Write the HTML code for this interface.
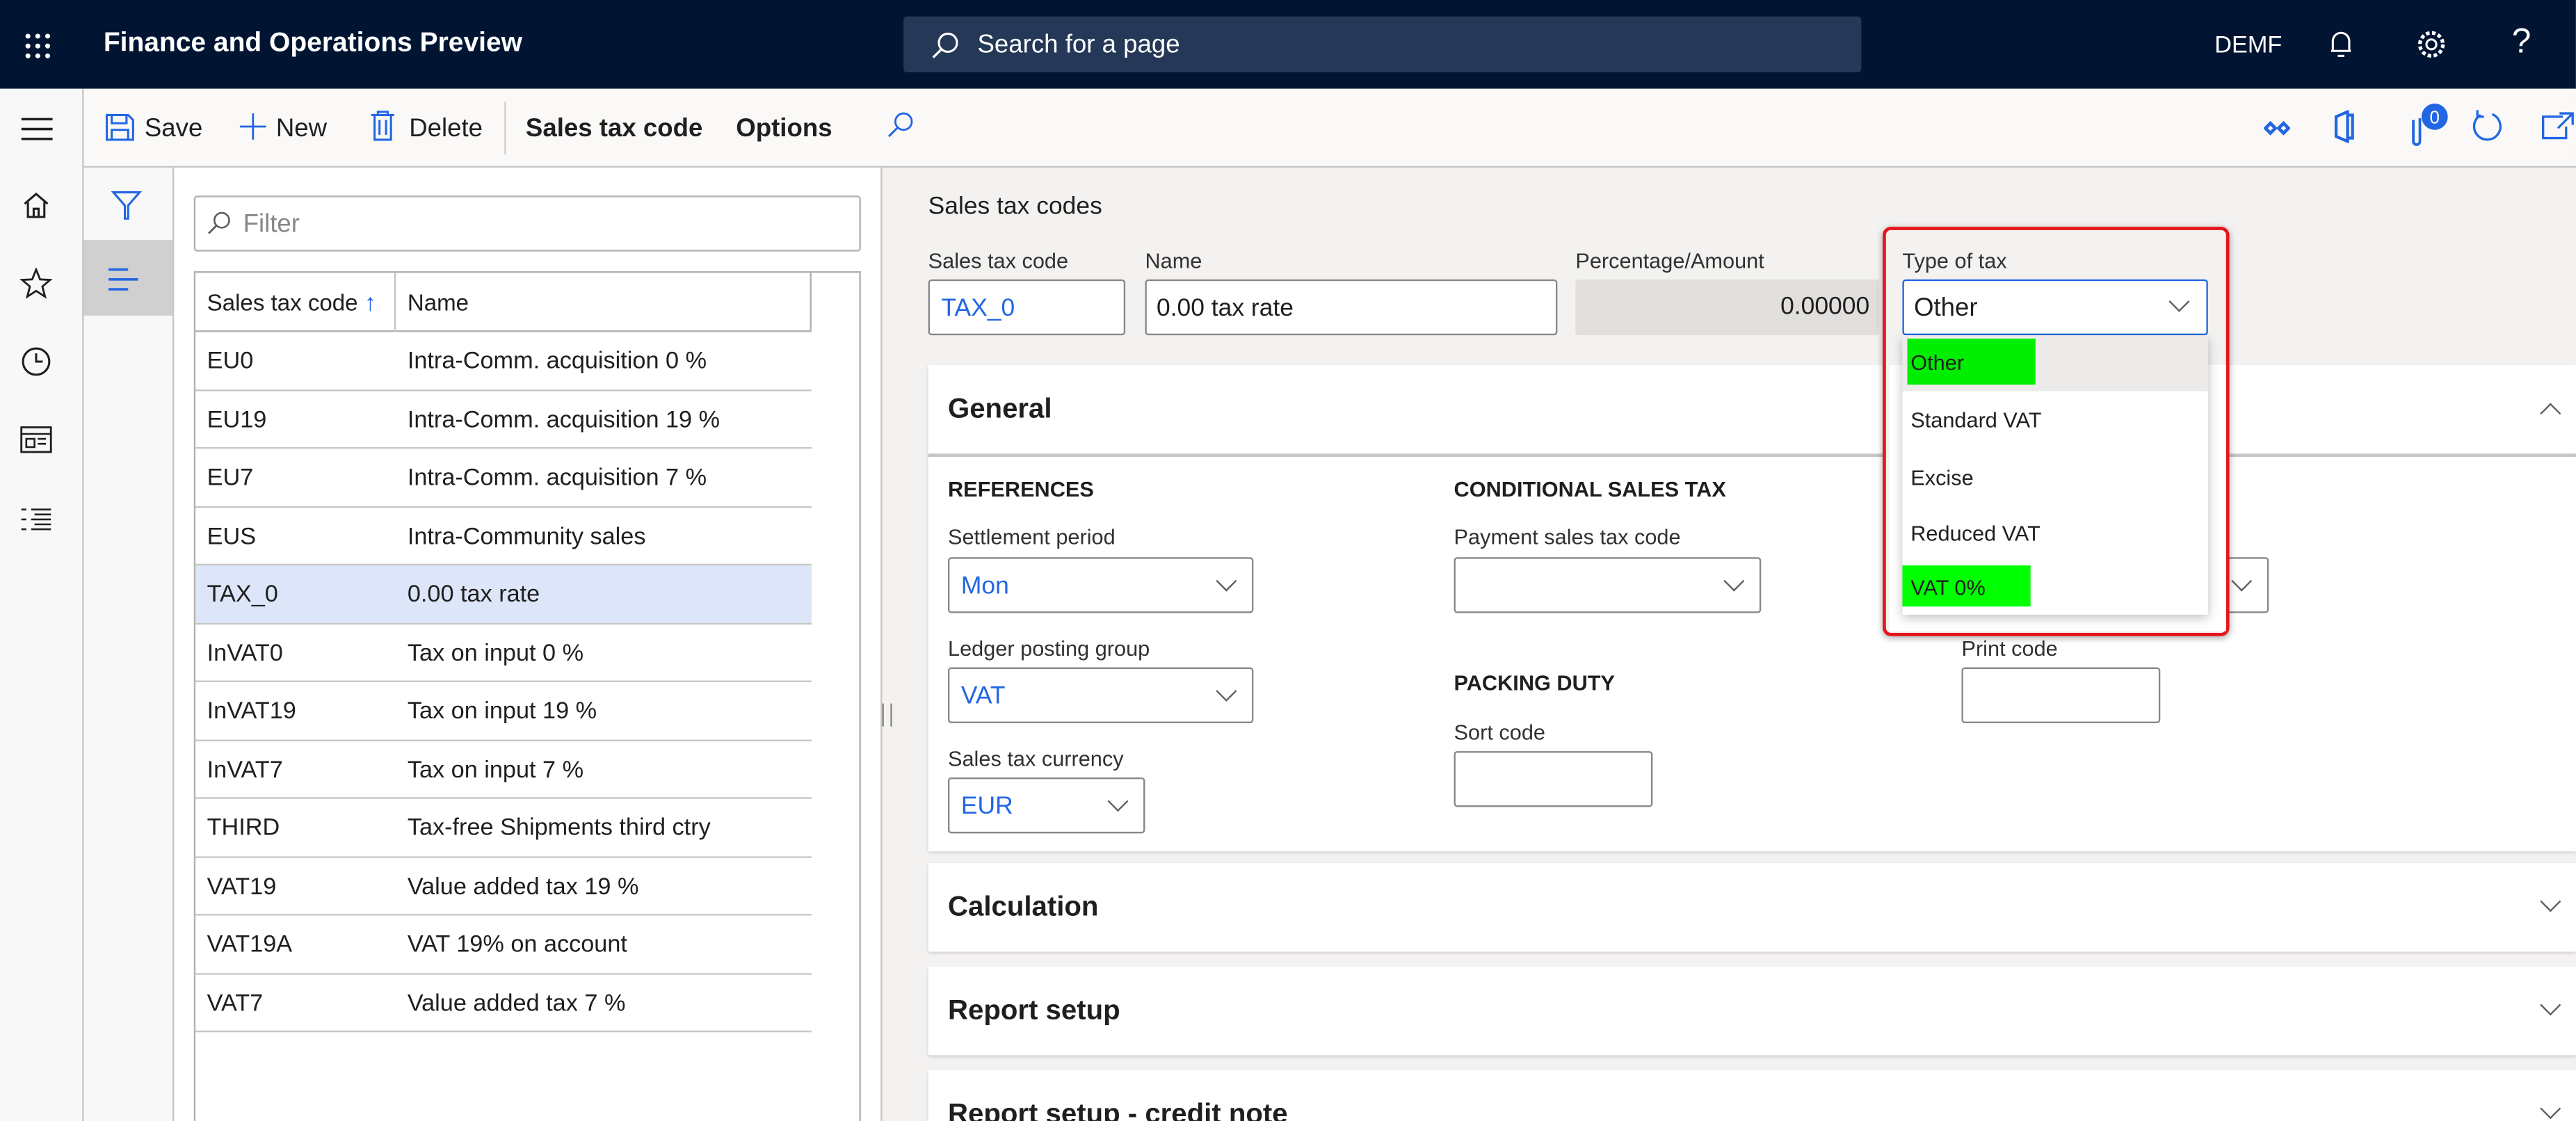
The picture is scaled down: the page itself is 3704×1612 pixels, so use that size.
<!DOCTYPE html>
<html><head><meta charset="utf-8">
<style>
html,body{margin:0;padding:0;width:3704px;height:1612px;overflow:hidden;background:#f3f2f1}
#s{position:absolute;left:0;top:0;width:1568px;height:682px;transform:scale(2.3622,2.3636);transform-origin:0 0;font-family:"Liberation Sans",sans-serif;color:#201f1e;font-size:14px;overflow:hidden;background:#f3f2f1}
.a{position:absolute}
.t{position:absolute;white-space:nowrap}
.in{position:absolute;background:#fff;border:1px solid #8a8886;border-radius:2px;box-sizing:border-box}
.lbl{position:absolute;font-size:13px;color:#323130;white-space:nowrap}
.chev{position:absolute;width:8px;height:8px;border-right:1.3px solid #605e5c;border-bottom:1.3px solid #605e5c;transform:rotate(45deg)}
.row{position:absolute;left:0;width:375px;height:35.5px;border-bottom:1px solid #c8c6c4;box-sizing:border-box}
.row span{position:absolute;top:10px;font-size:14.5px}
.card{position:absolute;left:565px;width:1003px;background:#fff;box-shadow:0 1px 2px rgba(0,0,0,.15)}
.card .h{position:absolute;left:12px;font-size:17px;font-weight:bold;top:17px}
.blue{color:#2266e3}
</style></head><body><div id="s">
<!-- header -->
<div class="a" style="left:0;top:0;width:1568px;height:54px;background:#011532"></div>
<svg class="a" style="left:14px;top:19px" width="18" height="18"><g fill="#fff"><circle cx="3" cy="3" r="1.5"/><circle cx="9" cy="3" r="1.5"/><circle cx="15" cy="3" r="1.5"/><circle cx="3" cy="9" r="1.5"/><circle cx="9" cy="9" r="1.5"/><circle cx="15" cy="9" r="1.5"/><circle cx="3" cy="15" r="1.5"/><circle cx="9" cy="15" r="1.5"/><circle cx="15" cy="15" r="1.5"/></g></svg>
<div class="t" style="left:63px;top:17px;color:#fff;font-weight:bold;font-size:16.5px">Finance and Operations Preview</div>
<div class="a" style="left:550px;top:10px;width:583px;height:34px;background:#253857;border-radius:2px"></div>
<svg class="a" style="left:566px;top:19px" width="18" height="18"><circle cx="11" cy="7" r="5.5" fill="none" stroke="#fff" stroke-width="1.3"/><path d="M7 11 L2 16" stroke="#fff" stroke-width="1.4"/></svg>
<div class="t" style="left:595px;top:19px;color:#fff;font-size:15.5px">Search for a page</div>
<div class="t" style="left:1348px;top:20px;color:#fff;font-size:14.5px">DEMF</div>
<svg class="a" style="left:1416px;top:17px" width="18" height="20"><path d="M4 14 V8 a5 5 0 0 1 10 0 V14 Z M3 14 H15 M7 17 H11" fill="none" stroke="#fff" stroke-width="1.3"/></svg>
<svg class="a" style="left:1470px;top:17px" width="20" height="20"><circle cx="10" cy="10" r="3" fill="none" stroke="#fff" stroke-width="1.3"/><circle cx="10" cy="10" r="7" fill="none" stroke="#fff" stroke-width="2.2" stroke-dasharray="2.2 1.5"/></svg>
<div class="t" style="left:1529px;top:14px;color:#fff;font-size:21px">?</div>
<!-- left nav -->
<div class="a" style="left:0;top:54px;width:50px;height:628px;background:#f8f8f8;border-right:1px solid #c8c6c4"></div>
<svg class="a" style="left:13px;top:71px" width="20" height="15"><path d="M0 1.5H19M0 7.5H19M0 13.5H19" stroke="#201f1e" stroke-width="1.5"/></svg>
<svg class="a" style="left:13px;top:116px" width="18" height="18"><path d="M2 8 L9 2 L16 8 M4 7 V16 H14 V7 M7.5 16 V11 H10.5 V16" fill="none" stroke="#201f1e" stroke-width="1.3"/></svg>
<svg class="a" style="left:12px;top:163px" width="20" height="19"><path d="M10 1 L12.4 7 L18.5 7.3 L13.8 11.3 L15.4 17.5 L10 14 L4.6 17.5 L6.2 11.3 L1.5 7.3 L7.6 7 Z" fill="none" stroke="#201f1e" stroke-width="1.2"/></svg>
<svg class="a" style="left:12px;top:210px" width="20" height="20"><circle cx="10" cy="10" r="8" fill="none" stroke="#201f1e" stroke-width="1.3"/><path d="M10 5V10H14" fill="none" stroke="#201f1e" stroke-width="1.3"/></svg>
<svg class="a" style="left:12px;top:259px" width="20" height="17"><rect x="1" y="1" width="18" height="15" fill="none" stroke="#201f1e" stroke-width="1.2"/><path d="M1 5H19M4 8H9V13H4ZM11 8H16M11 11H16" fill="none" stroke="#201f1e" stroke-width="1.1"/></svg>
<svg class="a" style="left:12px;top:308px" width="20" height="17"><path d="M1 2H4M1 8H4M1 14H4M7 2H19M7 8H19M7 14H19M9 5H19M9 11H19" stroke="#201f1e" stroke-width="1.1"/></svg>
<!-- action pane -->
<div class="a" style="left:51px;top:54px;width:1517px;height:47px;background:#faf9f8;border-bottom:1.5px solid #c8c6c4"></div>
<svg class="a" style="left:64px;top:69px" width="18" height="17"><path d="M1 1H14L17 4V16H1Z M4 1V6H13V1 M4 16V10H14V16" fill="none" stroke="#2266e3" stroke-width="1.3"/></svg>
<div class="t" style="left:88px;top:70px;font-size:15.5px">Save</div>
<svg class="a" style="left:145px;top:68px" width="18" height="18"><path d="M9 1V17M1 9H17" stroke="#2266e3" stroke-width="1.2"/></svg>
<div class="t" style="left:168px;top:70px;font-size:15.5px">New</div>
<svg class="a" style="left:225px;top:67px" width="16" height="19"><path d="M1 3H15M5 3V1H11V3M3 3V18H13V3M6 6V15M10 6V15" fill="none" stroke="#2266e3" stroke-width="1.3"/></svg>
<div class="t" style="left:249px;top:70px;font-size:15.5px">Delete</div>
<div class="a" style="left:307px;top:62px;width:1px;height:32px;background:#d2d0ce"></div>
<div class="t" style="left:320px;top:70px;font-size:15.5px;font-weight:bold;font-weight:600">Sales tax code</div>
<div class="t" style="left:448px;top:70px;font-size:15.5px;font-weight:600">Options</div>
<svg class="a" style="left:539px;top:67px" width="18" height="18"><circle cx="11" cy="7" r="5" fill="none" stroke="#2266e3" stroke-width="1.2"/><path d="M7.5 10.5 L2 16" stroke="#2266e3" stroke-width="1.3"/></svg>
<svg class="a" style="left:1378px;top:72px" width="16" height="12"><g fill="none" stroke="#2266e3" stroke-width="2"><path d="M1 6L4 3L7 6L4 9Z M9 6L12 3L15 6L12 9Z"/></g></svg>
<svg class="a" style="left:1420px;top:67px" width="14" height="20"><path d="M2 4L9 1V19L2 16Z M9 3H12V17H9" fill="none" stroke="#2266e3" stroke-width="1.8"/></svg>
<svg class="a" style="left:1465px;top:62px" width="26" height="28"><path d="M4 11V24a2 2 0 0 0 4 0V10" fill="none" stroke="#2266e3" stroke-width="1.6"/><circle cx="17" cy="9" r="8" fill="#2266e3"/><text x="17" y="13" font-size="11" fill="#fff" text-anchor="middle" font-family="Liberation Sans">0</text></svg>
<svg class="a" style="left:1503px;top:66px" width="21" height="22"><path d="M7 4A8 8 0 1 0 14 3.5" fill="none" stroke="#2266e3" stroke-width="1.4"/><path d="M5 1V5H9" fill="none" stroke="#2266e3" stroke-width="1.4"/></svg>
<svg class="a" style="left:1546px;top:68px" width="22" height="18"><path d="M14 3H2V16H16V9 M12 1H20V8 M20 1L11 10" fill="none" stroke="#2266e3" stroke-width="1.4"/></svg>
<!-- filter pane -->
<div class="a" style="left:51px;top:102px;width:54px;height:580px;background:#f8f8f8;border-right:1px solid #c8c6c4"></div>
<svg class="a" style="left:67px;top:115px" width="20" height="20"><path d="M2 2H18L11 10V18H9V10Z" fill="none" stroke="#2266e3" stroke-width="1.3"/></svg>
<div class="a" style="left:51px;top:146px;width:54px;height:46px;background:#d0d0d0"></div>
<svg class="a" style="left:66px;top:163px" width="20" height="14"><path d="M0 1H12M0 7H18M0 13H12" stroke="#2266e3" stroke-width="1.5"/></svg>
<!-- list -->
<div class="a" style="left:106px;top:102px;width:430px;height:580px;background:#fff;border-right:1px solid #c8c6c4"></div>
<div class="a" style="left:537px;top:428px;width:4px;height:14px;border-left:1px solid #8a8886;border-right:1px solid #8a8886"></div>
<div class="in" style="left:118px;top:119px;width:406px;height:34px;border-color:#b3b0ad"></div>
<svg class="a" style="left:125px;top:128px" width="16" height="16"><circle cx="10" cy="6" r="4.5" fill="none" stroke="#605e5c" stroke-width="1.1"/><path d="M7 9L2 14" stroke="#605e5c" stroke-width="1.2"/></svg>
<div class="t" style="left:148px;top:128px;color:#8a8886;font-size:15.5px">Filter</div>
<div class="a" style="left:118px;top:165px;width:406px;height:517px;border:1px solid #b3b0ad;border-bottom:none;box-sizing:border-box">
 <div class="row" style="top:0;height:36px;border-bottom:1.5px solid #b3b0ad"><span style="left:7px;top:10px;font-size:14px">Sales tax code <span class="blue" style="position:static">&#8593;</span></span><div class="a" style="left:121px;top:0;width:1px;height:36px;background:#c8c6c4"></div><span style="left:129px;top:10px;font-size:14px">Name</span><div class="a" style="left:374px;top:0;width:1px;height:36px;background:#b3b0ad"></div></div>
 <div class="row" style="top:36px"><span style="left:7px">EU0</span><span style="left:129px">Intra-Comm. acquisition 0 %</span></div>
 <div class="row" style="top:71.5px"><span style="left:7px">EU19</span><span style="left:129px">Intra-Comm. acquisition 19 %</span></div>
 <div class="row" style="top:107px"><span style="left:7px">EU7</span><span style="left:129px">Intra-Comm. acquisition 7 %</span></div>
 <div class="row" style="top:142.5px"><span style="left:7px">EUS</span><span style="left:129px">Intra-Community sales</span></div>
 <div class="row" style="top:178px;background:#dce6f8"><span style="left:7px">TAX_0</span><span style="left:129px">0.00 tax rate</span></div>
 <div class="row" style="top:213.5px"><span style="left:7px">InVAT0</span><span style="left:129px">Tax on input 0 %</span></div>
 <div class="row" style="top:249px"><span style="left:7px">InVAT19</span><span style="left:129px">Tax on input 19 %</span></div>
 <div class="row" style="top:284.5px"><span style="left:7px">InVAT7</span><span style="left:129px">Tax on input 7 %</span></div>
 <div class="row" style="top:320px"><span style="left:7px">THIRD</span><span style="left:129px">Tax-free Shipments third ctry</span></div>
 <div class="row" style="top:355.5px"><span style="left:7px">VAT19</span><span style="left:129px">Value added tax 19 %</span></div>
 <div class="row" style="top:391px"><span style="left:7px">VAT19A</span><span style="left:129px">VAT 19% on account</span></div>
 <div class="row" style="top:426.5px"><span style="left:7px">VAT7</span><span style="left:129px">Value added tax 7 %</span></div>
</div>
<!-- details -->
<div class="t" style="left:565px;top:117px;font-size:15px">Sales tax codes</div>
<div class="lbl" style="left:565px;top:151px">Sales tax code</div>
<div class="lbl" style="left:697px;top:151px">Name</div>
<div class="lbl" style="left:959px;top:151px">Percentage/Amount</div>
<div class="in" style="left:565px;top:170px;width:120px;height:34px"><span class="t blue" style="left:7px;top:8px;font-size:15px">TAX_0</span></div>
<div class="in" style="left:697px;top:170px;width:251px;height:34px"><span class="t" style="left:6px;top:8px;font-size:15px">0.00 tax rate</span></div>
<div class="a" style="left:959px;top:170px;width:185px;height:34px;background:#e1dfdd;border-radius:2px"><span class="t" style="right:6px;top:8px;font-size:15px">0.00000</span></div>
<!-- General -->
<div class="card" style="top:222px;height:296px">
 <div class="h">General</div>
 <div class="chev" style="left:983px;top:25px;transform:rotate(225deg)"></div>
 <div class="a" style="left:0;top:54px;width:1003px;height:1.5px;background:#c8c6c4"></div>
</div>
<div class="t" style="left:577px;top:290px;font-size:13px;font-weight:bold">REFERENCES</div>
<div class="lbl" style="left:577px;top:319px">Settlement period</div>
<div class="in" style="left:577px;top:339px;width:186px;height:34px"><span class="t blue" style="left:7px;top:8px;font-size:15px">Mon</span><div class="chev" style="left:164px;top:9px"></div></div>
<div class="lbl" style="left:577px;top:387px">Ledger posting group</div>
<div class="in" style="left:577px;top:406px;width:186px;height:34px"><span class="t blue" style="left:7px;top:8px;font-size:15px">VAT</span><div class="chev" style="left:164px;top:9px"></div></div>
<div class="lbl" style="left:577px;top:454px">Sales tax currency</div>
<div class="in" style="left:577px;top:473px;width:120px;height:34px"><span class="t blue" style="left:7px;top:8px;font-size:15px">EUR</span><div class="chev" style="left:98px;top:9px"></div></div>
<div class="t" style="left:885px;top:290px;font-size:13px;font-weight:bold">CONDITIONAL SALES TAX</div>
<div class="lbl" style="left:885px;top:319px">Payment sales tax code</div>
<div class="in" style="left:885px;top:339px;width:187px;height:34px"><div class="chev" style="left:165px;top:9px"></div></div>
<div class="t" style="left:885px;top:408px;font-size:13px;font-weight:bold">PACKING DUTY</div>
<div class="lbl" style="left:885px;top:438px">Sort code</div>
<div class="in" style="left:885px;top:457px;width:121px;height:34px"></div>
<div class="in" style="left:1194px;top:339px;width:187px;height:34px"><div class="chev" style="left:165px;top:9px"></div></div>
<div class="lbl" style="left:1194px;top:387px">Print code</div>
<div class="in" style="left:1194px;top:406px;width:121px;height:34px"></div>
<div class="card" style="top:525px;height:54px"><div class="h">Calculation</div><div class="chev" style="left:983px;top:19px"></div></div>
<div class="card" style="top:588px;height:54px"><div class="h">Report setup</div><div class="chev" style="left:983px;top:19px"></div></div>
<div class="card" style="top:651px;height:54px"><div class="h">Report setup - credit note</div><div class="chev" style="left:983px;top:19px"></div></div>
<!-- type of tax + dropdown -->
<div class="a" style="left:1146px;top:138px;width:211px;height:249px;background:#f3f2f1;border:2px solid #e8141c;border-radius:5px;box-sizing:border-box;box-shadow:0 1px 4px rgba(0,0,0,.35)"></div>
<div class="a" style="left:1150px;top:222px;width:205px;height:162px;background:#fff"></div>
<div class="lbl" style="left:1158px;top:151px">Type of tax</div>
<div class="in" style="left:1158px;top:170px;width:186px;height:34px;border:1.5px solid #2266e3"><span class="t" style="left:6px;top:8px;font-size:15.5px">Other</span><div class="chev" style="left:163px;top:8px"></div></div>
<div class="a" style="left:1158px;top:204px;width:186px;height:170px;background:#fff;box-shadow:0 2px 6px rgba(0,0,0,.25)"></div>
<div class="a" style="left:1158px;top:204px;width:186px;height:34px;background:#edebe9"></div>
<div class="a" style="left:1161px;top:206px;width:78px;height:28px;background:#00ee00"></div>
<div class="t" style="left:1163px;top:213px;font-size:13px">Other</div>
<div class="t" style="left:1163px;top:248px;font-size:13px">Standard VAT</div>
<div class="t" style="left:1163px;top:283px;font-size:13px">Excise</div>
<div class="t" style="left:1163px;top:317px;font-size:13px">Reduced VAT</div>
<div class="a" style="left:1158px;top:344px;width:78px;height:25px;background:#00ff00"></div>
<div class="t" style="left:1163px;top:350px;font-size:13px">VAT 0%</div>
</div></body></html>
